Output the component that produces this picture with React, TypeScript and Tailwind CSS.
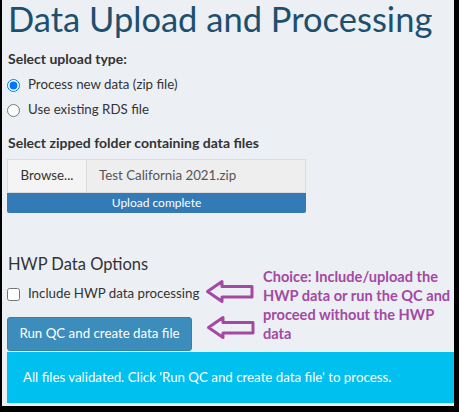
import React from "react";

function Arrow({ className }: { className?: string }) {
  return (
    <svg width="50" height="26" viewBox="0 0 50 26" className={className}>
      <path
        d="M2.5 12.5 L17 2.5 L17 7.5 L47 7.5 L47 18 L17 18 L17 22.5 Z"
        fill="none"
        stroke="#a349a4"
        strokeWidth="3"
        strokeLinejoin="round"
      />
    </svg>
  );
}

export default function App() {
  return (
    <div className="w-[459px] h-[412px] bg-black pt-[1px] pl-[2px] pr-[5px] pb-[3px]">
      <div
        className="relative w-full h-full bg-[#ecf0f5] pl-[5px] text-[#333] text-[13.3px]"
        style={{ fontFamily: "Lato, 'Open Sans', sans-serif" }}
      >
        <h1 className="text-[34.5px] leading-[42px] -mt-[3px] text-[#1d4f6e] pl-[1px]">
          Data Upload and Processing
        </h1>

        <div className="mt-[9px] font-bold text-[14px] leading-[20px] pl-[1px]">Select upload type:</div>
        <label className="flex items-center gap-[8px] mt-[6px] h-[20px]">
          <input type="radio" name="t" defaultChecked className="m-0 w-[13px] h-[13px]" />
          <span>Process new data (zip file)</span>
        </label>
        <label className="flex items-center gap-[8px] mt-[5px] h-[20px]">
          <input type="radio" name="t" className="m-0 w-[13px] h-[13px]" />
          <span>Use existing RDS file</span>
        </label>

        <div className="mt-[13px] font-bold text-[14px] leading-[20px] pl-[1px]">
          Select zipped folder containing data files
        </div>
        <div className="mt-[6px] w-[299px] flex h-[34px] border border-[#dddddd]">
          <div className="w-[79px] bg-[#f4f4f4] border-r border-[#dddddd] flex items-center justify-center">
            Browse...
          </div>
          <div className="flex-1 bg-[#eeeeee] flex items-center pl-[12px] text-[#555]">
            Test California 2021.zip
          </div>
        </div>
        <div className="w-[299px] h-[20px] bg-[#337ab7] text-white text-[12px] flex items-center justify-center rounded-b-[2px]">
          Upload complete
        </div>

        <div className="mt-[40px] text-[16.5px] leading-[22px] pl-[1px]">HWP Data Options</div>

        <label className="flex items-center gap-[8px] mt-[9px] h-[20px]">
          <input type="checkbox" className="m-0 w-[13px] h-[13px]" />
          <span>Include HWP data processing</span>
        </label>
        <button className="block mt-[13px] w-[185px] h-[34px] bg-[#3c8dbc] text-white text-[13.3px] rounded-[3px] border border-[#367fa9]">
          Run QC and create data file
        </button>

        <div className="mt-[1px] h-[51px] bg-[#00c0ef] text-white flex items-center pl-[16px] w-full">
          All files validated. Click 'Run QC and create data file' to process.
        </div>

        <Arrow className="absolute left-[203px] top-[281px]" />
        <Arrow className="absolute left-[204px] top-[317px]" />
        <div className="absolute left-[261px] top-[269px] text-[#a349a4] font-bold text-[14.6px] leading-[19px] w-[191px]">
          Choice: Include/upload the
          <br />
          HWP data or run the QC and
          <br />
          proceed without the HWP
          <br />
          data
        </div>
      </div>
    </div>
  );
}
